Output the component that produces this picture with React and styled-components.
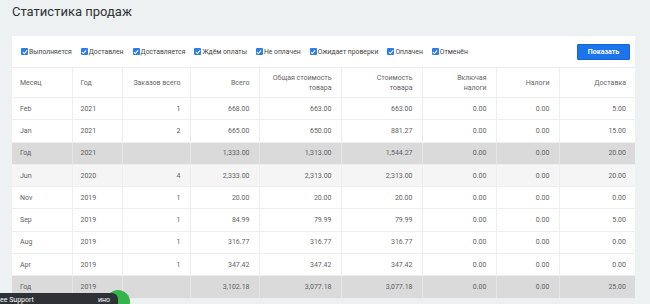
import React from "react";
import styled, { createGlobalStyle } from "styled-components";

const Global = createGlobalStyle`
  html, body { margin: 0; padding: 0; }
  body {
    background: #eef1f2;
    font-family: Roboto, "Noto Sans", "Liberation Sans", sans-serif;
    overflow: hidden;
    height: 304px;
  }
`;

const Page = styled.div`
  padding: 4px 15px 0 12px;
`;

const Title = styled.h1`
  margin: 0;
  height: 32px;
  font-size: 13px;
  font-weight: 400;
  line-height: 16px;
  color: #2f3336;
`;

const Card = styled.div`
  background: #fff;
  width: 623px;
`;

const FilterBar = styled.div`
  display: flex;
  align-items: center;
  height: 32px;
  padding: 0 5px 0 9px;
  border-bottom: 1px solid #ececec;
  box-sizing: border-box;
`;

const Checks = styled.div`
  display: flex;
  align-items: center;
  flex: 1;
`;

const CheckItem = styled.label`
  display: flex;
  align-items: center;
  gap: 1px;
  margin-right: 9px;
  font-size: 6.8px;
  color: #444;
  white-space: nowrap;
`;

const Box = styled.span`
  width: 7px;
  height: 7px;
  border-radius: 1px;
  background: #2d7ee6;
  display: inline-flex;
  align-items: center;
  justify-content: center;
`;

const ShowButton = styled.button`
  width: 53px;
  height: 16px;
  background: #1b74ec;
  border: 1px solid #1565d0;
  border-radius: 1px;
  color: #fff;
  font-family: inherit;
  font-size: 7px;
  font-weight: 700;
  padding: 0;
`;

const Table = styled.table`
  width: 623px;
  border-collapse: collapse;
  table-layout: fixed;
  font-size: 7px;
  color: #5f5f5f;
`;

const Th = styled.th`
  height: 29px;
  padding: 0 9px 0 8px;
  font-weight: 400;
  color: #666;
  line-height: 10px;
  white-space: pre-line;
  text-align: ${(p) => (p.$left ? "left" : "right")};
  border-left: 1px solid #eeeeee;
  border-bottom: 1px solid #eeeeee;
  &:first-child { border-left: none; }
`;

const Tr = styled.tr`
  height: 22.3px;
  background: ${(p) => (p.$total ? "#dadada" : p.$alt ? "#f5f5f5" : "#fff")};
`;

const Td = styled.td`
  padding: 0 9px 0 8px;
  text-align: ${(p) => (p.$left ? "left" : "right")};
  border-left: 1px solid ${(p) => (p.$total ? "#e6e6e6" : "#eeeeee")};
  border-bottom: 1px solid #eeeeee;
  &:first-child { border-left: none; }
`;

const Widget = styled.div`
  position: fixed;
  left: 0;
  bottom: 0;
  width: 130px;
  height: 14px;
`;

const Bubble = styled.span`
  position: absolute;
  left: 106px;
  top: 0;
  width: 24px;
  height: 24px;
  border-radius: 50%;
  background: #34b54a;
`;

const Bar = styled.div`
  position: absolute;
  left: 0;
  top: 3px;
  width: 118px;
  height: 14px;
  background: #2e3236;
  border-radius: 0 6px 0 0;
  display: flex;
  align-items: flex-start;
  justify-content: space-between;
  padding: 3px 8px 0 0;
  box-sizing: border-box;
  font-size: 7px;
  color: #fff;
  overflow: hidden;
`;

const BarText = styled.span`
  white-space: nowrap;
`;

const Check = () => (
  <svg width="6" height="6" viewBox="0 0 10 10">
    <path d="M1.5 5.2 L4 7.6 L8.6 2.4" fill="none" stroke="#fff" strokeWidth="1.8" />
  </svg>
);

const filters = [
  "Выполняется",
  "Доставлен",
  "Доставляется",
  "Ждём оплаты",
  "Не оплачен",
  "Ожидает проверки",
  "Оплачен",
  "Отменён",
];

const cols = [60, 50, 68, 69, 82, 81, 74, 63, 76];

const headers = [
  ["Месяц", true],
  ["Год", true],
  ["Заказов всего"],
  ["Всего"],
  ["Общая стоимость\nтовара"],
  ["Стоимость\nтовара"],
  ["Включая\nналоги"],
  ["Налоги"],
  ["Доставка"],
];

const rows = [
  { c: ["Feb", "2021", "1", "668.00", "663.00", "663.00", "0.00", "0.00", "5.00"] },
  { c: ["Jan", "2021", "2", "665.00", "650.00", "881.27", "0.00", "0.00", "15.00"] },
  { c: ["Год", "2021", "", "1,333.00", "1,313.00", "1,544.27", "0.00", "0.00", "20.00"], total: true },
  { c: ["Jun", "2020", "4", "2,333.00", "2,313.00", "2,313.00", "0.00", "0.00", "20.00"], alt: true },
  { c: ["Nov", "2019", "1", "20.00", "20.00", "20.00", "0.00", "0.00", "0.00"] },
  { c: ["Sep", "2019", "1", "84.99", "79.99", "79.99", "0.00", "0.00", "5.00"] },
  { c: ["Aug", "2019", "1", "316.77", "316.77", "316.77", "0.00", "0.00", "0.00"] },
  { c: ["Apr", "2019", "1", "347.42", "347.42", "347.42", "0.00", "0.00", "0.00"] },
  { c: ["Год", "2019", "", "3,102.18", "3,077.18", "3,077.18", "0.00", "0.00", "25.00"], total: true },
];

export default function App() {
  return (
    <>
      <Global />
      <Page>
        <Title>Статистика продаж</Title>
        <Card>
          <FilterBar>
            <Checks>
              {filters.map((f) => (
                <CheckItem key={f}>
                  <Box>
                    <Check />
                  </Box>
                  {f}
                </CheckItem>
              ))}
            </Checks>
            <ShowButton>Показать</ShowButton>
          </FilterBar>
          <Table>
            <colgroup>
              {cols.map((w, i) => (
                <col key={i} style={{ width: w }} />
              ))}
            </colgroup>
            <thead>
              <tr>
                {headers.map(([h, left]) => (
                  <Th key={h} $left={left}>
                    {h}
                  </Th>
                ))}
              </tr>
            </thead>
            <tbody>
              {rows.map((r, i) => (
                <Tr key={i} $total={r.total} $alt={r.alt}>
                  {r.c.map((v, j) => (
                    <Td key={j} $left={j < 2} $total={r.total}>
                      {v}
                    </Td>
                  ))}
                </Tr>
              ))}
            </tbody>
          </Table>
        </Card>
      </Page>
      <Widget>
        <Bubble />
        <Bar>
          <BarText>ee Support</BarText>
          <span>ино</span>
        </Bar>
      </Widget>
    </>
  );
}
